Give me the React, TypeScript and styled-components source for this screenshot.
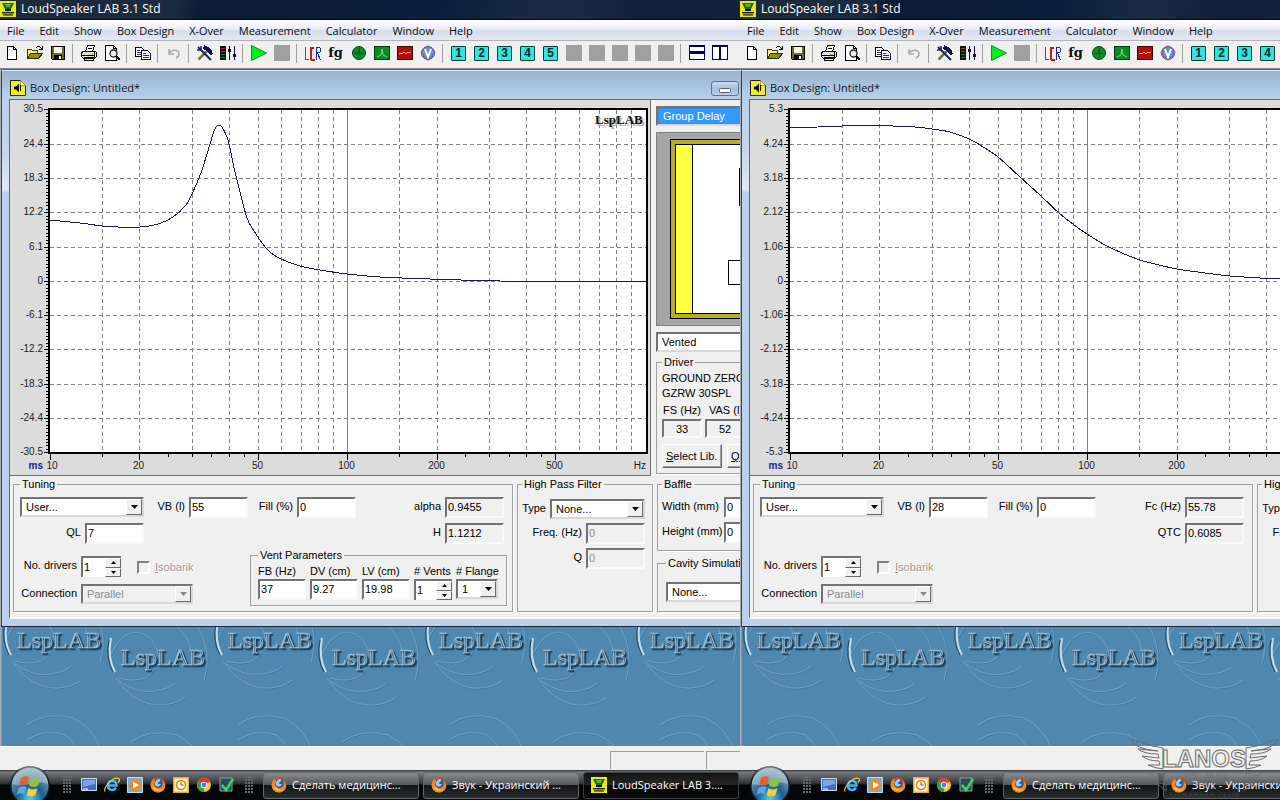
import React, { useId } from 'react';
import styled, { createGlobalStyle } from 'styled-components';

const UI = `"Open Sans", "Noto Sans", sans-serif`;
const SANS = `"Liberation Sans", Arial, sans-serif`;
const SERIF = `"Liberation Serif", "Times New Roman", serif`;

const GlobalStyle = createGlobalStyle`
  *, *::before, *::after { box-sizing: border-box; }
  body { margin: 0; background: #f0f0f0; }
  button, input, select { font: inherit; color: inherit; margin: 0; border-radius: 0; }
  fieldset { min-width: 0; margin: 0; }
`;

/* ---------- page shell ---------- */

const Desktop = styled.main`
  position: relative;
  display: grid;
  grid-template-columns: minmax(0, 37fr) minmax(0, 27fr);
  min-height: 100vh;
  overflow: hidden;
  font: 11px/14px ${SANS};
  color: #000;
`;

const Screen = styled.section`
  display: flex;
  flex-direction: column;
  min-width: 0;
  overflow: hidden;
`;

const TitleBar = styled.header`
  display: flex;
  align-items: center;
  gap: 5px;
  height: 20px;
  padding: 0 0 1px 0;
  color: #fff;
  font: 12px/18px ${UI};
  border-bottom: 1px solid #04090f;
  background: linear-gradient(100deg, #1d2a3b 0, #1a2a40 24%, #0b1c35 27%, #0c1f3a 60%, #1a2c44 75%, #0f2038 88%, #12243d 100%);
`;

const MenuBar = styled.nav`
  display: flex;
  height: 21px;
  flex: none;
  background: linear-gradient(#ffffff, #e9edf6 45%, #d6dcec 55%, #e4e9f4);
  border-bottom: 1px solid #b4b4b8;
`;

const MenuItem = styled.button`
  flex: none;
  border: 0;
  background: none;
  padding: 0 8px 0 7px;
  font: 11px/19px ${UI};
  color: #0a0a12;
`;

const ToolBar = styled.div`
  display: flex;
  align-items: center;
  height: 28px;
  flex: none;
  padding-bottom: 3px;
  background: #f0f0f0;
  border-bottom: 1px solid #8c8c8c;
`;

const ToolButton = styled.button`
  display: flex;
  align-items: center;
  justify-content: center;
  flex: none;
  width: 23px;
  height: 22px;
  padding: 0;
  border: 0;
  background: none;
`;

const ToolDivider = styled.span`
  flex: none;
  width: 1px;
  height: 19px;
  margin: 0 4px 0 3px;
  background: #a0a0a0;
`;

const Workspace = styled.div`
  display: flex;
  flex-direction: column;
  flex: 1;
  border-left: 1px solid #a9b0b5;
  border-top: 1px solid #5b6268;
`;

/* ---------- document window ---------- */

const DocWindow = styled.article`
  min-width: 739px;
  flex: none;
  border-left: 1px solid #39434c;
  border-top: 1px solid #d7e4f2;
  border-bottom: 1px solid #1d2a33;
  padding: 0 0 7px 7px;
  background: linear-gradient(#99b4d1 0, #b9d1ea 28px, #c3d6ea 80px, #dfeaf8 118px, #b9d1ea 122px);
`;

const DocTitle = styled.div`
  display: flex;
  align-items: center;
  gap: 4px;
  height: 28px;
  padding: 6px 0 0 1px;
  font: 11px/18px ${UI};
  color: #10141c;
`;

const MinimizeButton = styled.button`
  display: flex;
  align-items: flex-end;
  justify-content: center;
  width: 28px;
  height: 15px;
  margin-left: auto;
  margin-right: 1px;
  padding: 0 0 1px;
  border: 1px solid #5e7389;
  border-radius: 3px;
  background: linear-gradient(#c9dbee, #a5bfdb 50%, #b9d2ea);
`;

const DocBody = styled.div`
  border-left: 1px solid #5f6b74;
  border-top: 1px solid #5f6b74;
  border-bottom: 2px solid #fbfbfb;
  background: #f0f0f0;
  overflow: hidden;
`;

const UpperArea = styled.div`
  display: flex;
  height: 376px;
`;

const LowerArea = styled.div`
  display: flex;
  gap: 4px;
  padding: 2px 0 5px 3px;
`;

const ChartPane = styled.figure`
  flex: none;
  width: 641px;
  margin: 0;
  background: #dcdcdc;
  border-right: 1px solid #707070;
  border-bottom: 1px solid #707070;
  svg { display: block; }
`;

const SidePane = styled.aside`
  flex: 1;
  display: flex;
  flex-direction: column;
  padding: 6px 0 0 5px;
  min-width: 0;
  overflow: hidden;
`;

/* ---------- form parts ---------- */

const Group = styled.fieldset<{ $width?: number; $pad: string }>`
  flex: none;
  width: ${(p) => (p.$width ? `${p.$width}px` : 'auto')};
  padding: ${(p) => p.$pad};
  border: 1px solid #a0a0a0;
  box-shadow: 1px 1px 0 #fff;
`;

const DriverGroup = styled(Group)`
  margin-top: 4px;
`;

const Legend = styled.legend`
  padding: 0 2px;
  line-height: 13px;
`;

const Row = styled.div<{ $top?: number; $gap?: number }>`
  display: flex;
  align-items: flex-start;
  gap: ${(p) => p.$gap ?? 4}px;
  margin-top: ${(p) => p.$top ?? 0}px;
`;

const Label = styled.label<{ $width?: number; $align?: string }>`
  flex: none;
  width: ${(p) => (p.$width ? `${p.$width}px` : 'auto')};
  text-align: ${(p) => p.$align ?? 'right'};
  line-height: 18px;
  white-space: nowrap;
`;

const TextBox = styled.input<{ $width: number }>`
  flex: none;
  width: ${(p) => p.$width}px;
  height: 21px;
  padding: 0 0 2px 1px;
  border: 2px solid;
  border-color: #737373 #fafafa #fafafa #737373;
  background: ${(p) => (p.readOnly || p.disabled ? '#f0f0f0' : '#fff')};
  color: ${(p) => (p.disabled ? '#8a8a8a' : '#000')};
  outline: 0;
`;

const DriverValue = styled(TextBox)`
  height: 19px;
  padding: 0;
  text-align: center;
`;

const ComboFrame = styled.span<{ $width: number; $disabled?: boolean }>`
  flex: none;
  display: flex;
  width: ${(p) => p.$width}px;
  height: 20px;
  border: 2px solid;
  border-color: #737373 #d8d8d8 #d8d8d8 #737373;
  background: ${(p) => (p.$disabled ? '#f0f0f0' : '#fff')};
`;

const ComboSelect = styled.select<{ $active?: boolean; $pad?: number }>`
  flex: 1;
  min-width: 0;
  appearance: none;
  border: ${(p) => (p.$active ? '1px dotted #c86400' : '0')};
  padding: 0 0 0 ${(p) => p.$pad ?? 4}px;
  background: ${(p) => (p.$active ? '#3399ff' : 'transparent')};
  color: ${(p) => (p.$active ? '#fff' : p.disabled ? '#8a8a8a' : '#000')};
  opacity: 1;
  outline: 0;
`;

const ComboArrow = styled.span`
  display: flex;
  align-items: center;
  justify-content: center;
  width: 16px;
  background: #f0f0f0;
  border: 1px solid;
  border-color: #fff #696969 #696969 #fff;
`;

const SpinFrame = styled.span<{ $width: number }>`
  flex: none;
  display: flex;
  width: ${(p) => p.$width}px;
  height: 21px;
  border-left: 2px solid #737373;
  border-top: 2px solid #737373;
  background: #fff;
`;

const SpinInput = styled.input`
  flex: 1;
  min-width: 0;
  border: 0;
  padding: 0 0 2px 1px;
  background: none;
  outline: 0;
`;

const SpinButtons = styled.span`
  display: flex;
  flex-direction: column;
  width: 16px;
`;

const SpinButton = styled.button`
  flex: 1;
  display: flex;
  align-items: center;
  justify-content: center;
  padding: 0;
  border: 1px solid;
  border-color: #fff #696969 #696969 #fff;
  background: #f0f0f0;
`;

const TickBox = styled.input`
  flex: none;
  appearance: none;
  width: 13px;
  height: 13px;
  border: 2px solid;
  border-color: #808080 #fff #fff #808080;
  background: #f0f0f0;
`;

const TickLabel = styled.label`
  display: flex;
  align-items: center;
  gap: 5px;
  height: 22px;
  margin-left: 12px;
  color: #9a9a9a;
  text-shadow: 1px 1px 0 #fff;
`;

const PushButton = styled.button<{ $width: number }>`
  flex: none;
  width: ${(p) => p.$width}px;
  height: 24px;
  padding: 0 0 0 3px;
  text-align: left;
  white-space: nowrap;
  border: 1px solid;
  border-color: #fff #696969 #696969 #fff;
  box-shadow: inset -1px -1px 0 #a0a0a0;
  background: #f0f0f0;
`;

const Split = styled.div`
  display: flex;
  justify-content: space-between;
  min-height: 57px;
  margin-top: 5px;
`;

const DriverRows = styled.div`
  padding-top: 7px;
`;

const VentGrid = styled.div`
  display: grid;
  grid-template-columns: 48px 48px 48px 38px 43px;
  column-gap: 4px;
`;

const VentField = styled.div`
  display: flex;
  flex-direction: column;
  align-items: flex-start;
  label { line-height: 14px; height: 15px; }
`;

const SideStack = styled.div`
  display: flex;
  flex-direction: column;
  justify-content: space-between;
`;

const DriverName = styled.p`
  margin: 0;
  line-height: 15px;
  white-space: nowrap;
`;

const EnclosurePane = styled.div`
  flex: none;
  width: 160px;
  height: 194px;
  margin: 6px 0;
  border: 1px solid #808080;
  background: #a6a6a6;
  svg { display: block; }
`;

/* ---------- bottom of the screen ---------- */

const Wallpaper = styled.div`
  position: relative;
  flex: 1;
  min-height: 118px;
  border-left: 1px solid #7b98ad;
  background: #5087ae;
  overflow: hidden;
  svg { position: absolute; inset: 0; }
`;

const StatusBar = styled.footer`
  display: flex;
  justify-content: flex-end;
  flex: none;
  gap: 2px;
  min-width: 740px;
  height: 24px;
  padding-top: 4px;
  background: #f0f0f0;
  border-top: 1px solid #fff;
`;

const StatusCell = styled.span<{ $width: number }>`
  width: ${(p) => p.$width}px;
  height: 18px;
  border-left: 1px solid #a09c98;
  border-top: 1px solid #a09c98;
`;

const TaskBar = styled.nav`
  display: flex;
  align-items: center;
  flex: none;
  height: 30px;
  min-width: 740px;
  background: linear-gradient(#2b3036 0, #787b7f 2px, #46494d 10px, #2a2d30 14px, #030405 15px, #060708 100%);
`;

const StartButton = styled.button`
  flex: none;
  width: 60px;
  height: 30px;
  padding: 0;
  border: 0;
  background: none;
  svg { display: block; margin-top: -4px; }
`;

const Grip = styled.span`
  flex: none;
  width: 9px;
  height: 18px;
  margin-left: 3px;
  background: radial-gradient(circle at 1px 1px, #64696e 1px, transparent 1px) 0 0 / 3px 3px;
`;

const QuickLaunch = styled.div`
  display: flex;
  flex: none;
  margin: 0 4px 0 5px;
`;

const QuickButton = styled.button`
  width: 23px;
  height: 24px;
  padding: 0;
  border: 0;
  background: none;
  display: flex;
  align-items: center;
  justify-content: center;
`;

const TaskButtons = styled.div`
  display: flex;
  gap: 4px;
  margin-left: 9px;
`;

const TaskButton = styled.button<{ $active?: boolean }>`
  display: flex;
  align-items: center;
  gap: 5px;
  flex: none;
  width: 156px;
  height: 27px;
  padding: 0 0 0 7px;
  border: 1px solid ${(p) => (p.$active ? '#3c3f42' : '#63666a')};
  border-radius: 3px;
  font: 11px/18px ${UI};
  color: #fff;
  white-space: nowrap;
  overflow: hidden;
  background: ${(p) =>
    p.$active
      ? 'linear-gradient(#141414, #262626 46%, #050505 50%, #0a0a0a)'
      : 'linear-gradient(#8a8c8f, #56585b 46%, #141516 50%, #2a2c2e)'};
`;

const Watermark = styled.svg`
  position: absolute;
  right: 0;
  bottom: 0;
  pointer-events: none;
`;

/* ---------- icons ---------- */

const Px = ({ children, size = 18 }: { children: React.ReactNode; size?: number }) => (
  <svg width={size} height={size} viewBox="0 0 18 18" fill="none" shapeRendering="crispEdges" aria-hidden="true">
    {children}
  </svg>
);

const AppIcon = ({ size = 15 }: { size?: number }) => (
  <svg width={size} height={size} viewBox="0 0 16 16" aria-hidden="true">
    <rect width="16" height="16" fill="#eaea10" />
    <path d="M2 2h12l-3 6H5z" fill="#146a2c" />
    <path d="M5 3h6l-1 3H6z" fill="#5fae3c" />
    <path d="M5 8h6v2H5z" fill="#111" />
    <ellipse cx="8" cy="12.5" rx="6" ry="1.8" fill="#8a9412" />
    <path d="M2 11.5h12M3 14h10" stroke="#222" strokeWidth="1" />
  </svg>
);

const BoxIcon = () => (
  <svg width="16" height="16" viewBox="0 0 16 16" aria-hidden="true">
    <path d="M.5.5h10l5 5v10H.5z" fill="#f6ee1c" stroke="#222" />
    <path d="M10.500.5v5h5" fill="#fff9a8" stroke="#8a8410" strokeWidth=".7" />
    <path d="M4 6.500h2l3-3v9l-3-3H4z" fill="#111" />
    <path d="M10.500 5v6" stroke="#111" />
  </svg>
);

const icons: Record<string, React.ReactNode> = {
  New: <Px><path d="M4.500 2.500h6l3 3v10h-9z" fill="#fff" stroke="#000" /><path d="M10.500 2.500v3h3" stroke="#000" /></Px>,
  Open: (
    <Px>
      <path d="M1.500 14.500v-9h4l1 1h5v3" fill="#fff36b" stroke="#3c3c00" />
      <path d="M1.500 14.500l3-5h12l-4 5z" fill="#8c8c28" stroke="#2a2a00" />
      <path d="M10 4c2-2 4-2 6 1M13 5.500h3V2" stroke="#000" />
    </Px>
  ),
  Save: (
    <Px>
      <path d="M2.500 2.500h13v13h-12l-1-1z" fill="#6c6c18" stroke="#000" />
      <path d="M5 3h8v6H5z" fill="#f4f4f4" />
      <path d="M5 11h8v5H5z" fill="#000" /><path d="M10 12h2v3h-2z" fill="#fff" />
    </Px>
  ),
  Print: (
    <Px>
      <path d="M5.500 7.500l2-6h7l-2 6" fill="#fff" stroke="#000" />
      <path d="M1.500 8.500l2-1h12l1 1v4l-2 2h-11l-2-2z" fill="#e0e0e0" stroke="#000" />
      <path d="M2 11.500h12M4 13.500h9v3H4zM8 4.500h4M15 8l-1 6" stroke="#000" />
      <path d="M10 10h3" stroke="#c9c900" />
    </Px>
  ),
  Preview: (
    <Px>
      <path d="M2.500 1.500h8l3 3v12h-11z" fill="#fff" stroke="#000" />
      <path d="M10.500 1.500v3h3" stroke="#000" />
      <circle cx="10.500" cy="9.500" r="3.500" fill="#eef" stroke="#222" shapeRendering="auto" strokeWidth="1.300" />
      <path d="M13 12l4 4" stroke="#000" strokeWidth="2" />
    </Px>
  ),
  Copy: (
    <Px>
      <path d="M1.500 3.500h6l2 2v7h-8z" fill="#fff" stroke="#000" />
      <path d="M7.500 6.500h6l3 3v6h-9z" fill="#fff" stroke="#00006c" />
      <path d="M3 6.500h3M3 8.500h4M3 10.500h4M9 9.500h3M9 11.500h6M9 13.500h6" stroke="#333" />
    </Px>
  ),
  Undo: (
    <Px>
      <path d="M4 5v5h5M4 10c2-5 10-5 10 0 0 2-1 3-3 4" stroke="#a8a8a8" strokeWidth="1.500" shapeRendering="auto" />
    </Px>
  ),
  Setup: (
    <Px>
      <path d="M2.500 15.500L13 5" stroke="#77772c" strokeWidth="2.500" shapeRendering="auto" />
      <path d="M2 3l13 13" stroke="#20205c" strokeWidth="2" shapeRendering="auto" />
      <path d="M1 6l4 0 0-4" stroke="#20205c" strokeWidth="1.500" shapeRendering="auto" />
      <path d="M8 1c4 1 8 4 9 9l-3 1-3-4-4-2z" fill="#10105c" />
    </Px>
  ),
  Levels: (
    <Px>
      <path d="M1 2h6v14H1z" fill="#111" />
      <path d="M2 4.500h4" stroke="#d02020" /><path d="M2 7.500h4M2 10.500h4M2 13.500h4" stroke="#188030" />
      <path d="M10.500 2v14M15.500 2v14" stroke="#10105c" />
      <path d="M9 5h3v3H9zM14 10h3v3h-3z" fill="#10105c" />
    </Px>
  ),
  Run: <Px><path d="M1.500 1.500l15 7.500-15 7.500z" fill="#00f020" stroke="#089a18" shapeRendering="auto" /></Px>,
  Stop: <Px><path d="M1 1h16v16H1z" fill="#a0a0a0" /></Px>,
  LCR: (
    <Px>
      <path d="M1.500 3v12M1 15.500h4" stroke="#0c7a5a" />
      <path d="M10 3.500H7M7 3v13M7 15.500h4" stroke="#c81818" strokeWidth="2" />
      <path d="M12 16V3M12 3.500h4M16.500 4v4M12 8.500h4M13.500 9l3 7" stroke="#1a2a9c" />
    </Px>
  ),
  Curve: (
    <Px>
      <circle cx="9" cy="9" r="6.500" fill="#0c8a24" stroke="#044a10" shapeRendering="auto" />
      <path d="M5 9.500h3v-4M9.500 4v9M10 9.500h3" stroke="#075a18" />
    </Px>
  ),
  Spectrum: (
    <Px>
      <path d="M1.500 2.500h15v13h-15z" fill="#0c8a24" stroke="#033c0c" />
      <path d="M4 13l4-2 1-6 1 6 4 2" stroke="#6ee07c" shapeRendering="auto" />
    </Px>
  ),
  Scope: (
    <Px>
      <path d="M1.500 2.500h15v13h-15z" fill="#b40c0c" stroke="#400404" />
      <path d="M3 10l2-1 1 1 2-2 2 2 2-2 1 1 2-1" stroke="#ffb060" shapeRendering="auto" />
    </Px>
  ),
  Voltage: (
    <Px>
      <circle cx="9" cy="9" r="6.500" fill="#5f93dc" stroke="#3a4c9c" shapeRendering="auto" />
      <path d="M9 1.500l7 7-7 8-7-8z" stroke="#b8506c" shapeRendering="auto" />
      <path d="M6 5l3 8 3-8" stroke="#fff" strokeWidth="2" shapeRendering="auto" />
    </Px>
  ),
  Blank: <Px><rect x="1" y="1" width="16" height="16" rx="1" fill="#a0a0a0" /></Px>,
  'Tile horizontally': (
    <Px><path d="M1.500 1.500h15v6h-15zM1.500 9.500h15v6h-15z" fill="#fff" stroke="#000060" /><path d="M1 2h16M1 9h16" stroke="#000060" strokeWidth="2" /></Px>
  ),
  'Tile vertically': (
    <Px><path d="M1.500 1.500h7v14h-7zM9.500 1.500h7v14h-7z" fill="#fff" stroke="#000060" /><path d="M1 2h16" stroke="#000060" strokeWidth="2" /></Px>
  ),
};

const NumberKey = styled.span`
  width: 15px;
  height: 15px;
  border: 1px solid #063c3c;
  border-radius: 1px;
  background: #2fe6e0;
  font: bold 12px/13px ${SANS};
  text-align: center;
  color: #052a2a;
`;

const FgMark = styled.span`
  font: bold 13px/14px "DejaVu Serif", ${SERIF};
  color: #111;
`;

const TOOLS = [
  'New', 'Open', 'Save', '|', 'Print', 'Preview', '|', 'Copy', '|', 'Undo', '|', 'Setup', 'Levels', '|',
  'Run', 'Stop', '|', 'LCR', 'fg', 'Curve', 'Spectrum', 'Scope', 'Voltage', '|', '1', '2', '3', '4', '5',
  'Blank', 'Blank', 'Blank', 'Blank', 'Blank', '|', 'Tile horizontally', 'Tile vertically',
];

const MENUS = ['File', 'Edit', 'Show', 'Box Design', 'X-Over', 'Measurement', 'Calculator', 'Window', 'Help'];

const Firefox = () => (
  <svg width="16" height="16" viewBox="0 0 16 16" aria-hidden="true">
    <circle cx="8" cy="8" r="7.500" fill="#d9541a" />
    <circle cx="8.500" cy="6.500" r="5" fill="#2c5a9c" />
    <path d="M8 2c3 0 3 2 1 3s-1 2 1 2-1 4-4 2 0-6 2-7z" fill="#a9c6ea" />
    <path d="M.8 6C2 3 3 2 4 1.500c0 2 1 3 2 3-2 1-3 3-1 5s5 2 7 0c1-2 1-4 0-6 3 2 4 6 2 9-3 4-9 4-12 0C.5 10 .5 8 .8 6z" fill="#f08a1e" />
    <path d="M2 10c2 4 8 5 11 2-2 1-6 1-8-1z" fill="#ffd04a" />
  </svg>
);

const QUICK: [string, React.ReactNode][] = [
  ['Show desktop', (
    <svg width="16" height="14" viewBox="0 0 16 14" aria-hidden="true">
      <path d="M.5.5h15v12H.5z" fill="#3f6ec4" stroke="#cfdcf2" /><path d="M2 2h12v4L2 9z" fill="#7fa5e4" /><path d="M2 11h5" stroke="#fff" />
    </svg>
  )],
  ['Internet Explorer', (
    <svg width="16" height="16" viewBox="0 0 16 16" fill="none" aria-hidden="true">
      <path d="M4 8.500h8.500C12.500 2 4 2 4 8.500c0 5 6 6 8 2" stroke="#49b4f2" strokeWidth="2.500" />
      <path d="M1 14.500C-1 10 10-1 15 1.500c1 1 0 3-1 4" stroke="#f2c63c" strokeWidth="1.200" />
    </svg>
  )],
  ['Media Player', (
    <svg width="16" height="16" viewBox="0 0 16 16" aria-hidden="true">
      <path d="M.5.5h15v15H.5z" fill="#6fb4e0" stroke="#bcdcf0" /><circle cx="8" cy="8" r="6" fill="#f08a1c" /><path d="M6 4.500l6 3.500-6 3.500z" fill="#fff" />
    </svg>
  )],
  ['Firefox', <Firefox key="f" />],
  ['Outlook', (
    <svg width="16" height="16" viewBox="0 0 16 16" aria-hidden="true">
      <path d="M.5.5h15v15H.5z" fill="#fff1c4" stroke="#e9a93a" strokeWidth="2" /><circle cx="8" cy="8" r="4.500" fill="#fff8e0" stroke="#c8872a" strokeWidth="1.500" /><path d="M8 5v3h2.500" stroke="#805010" fill="none" />
    </svg>
  )],
  ['Chrome', (
    <svg width="16" height="16" viewBox="0 0 16 16" aria-hidden="true">
      <circle cx="8" cy="8" r="7" fill="#f4c81e" /><path d="M8 8L1.900 4.500A7 7 0 0 1 14.100 4.500z" fill="#dd3a2c" /><path d="M8 8L1.900 4.500A7 7 0 0 0 8 15z" fill="#35a04a" />
      <circle cx="8" cy="8" r="3.200" fill="#fff" /><circle cx="8" cy="8" r="2.400" fill="#3f7fe0" />
    </svg>
  )],
  ['Task checker', (
    <svg width="16" height="16" viewBox="0 0 16 16" aria-hidden="true">
      <path d="M1 1h12v13H1z" fill="#2c4c58" stroke="#8aa" /><path d="M3 8l4 5 7-11" stroke="#3fd46a" strokeWidth="2.500" fill="none" />
    </svg>
  )],
];

function StartOrb() {
  const id = useId();
  return (
    <svg width="60" height="34" viewBox="0 0 60 34" aria-hidden="true">
      <defs>
        <radialGradient id={id} cx="50%" cy="85%" r="80%">
          <stop offset="0" stopColor="#4fd0f4" /><stop offset=".45" stopColor="#1d5f92" /><stop offset="1" stopColor="#8fa8b8" />
        </radialGradient>
      </defs>
      <circle cx="30" cy="20" r="20" fill="#0c1c28" />
      <circle cx="30" cy="20" r="18.500" fill={`url(#${id})`} />
      <path d="M12 18a18 18 0 0 1 36 0c-12-5-24 4-36 0z" fill="#dce8ee" opacity=".4" />
      <path d="M21 12c3-2 6-2 8-1l-2 8c-3-1-5-1-8 1z" fill="#e8602c" />
      <path d="M31 11.500c3 2 5 2 9 0l-2 8c-3 2-6 2-9 0z" fill="#8cc63c" />
      <path d="M18.500 22c3-2 6-2 8-1l-2 7c-3-1-5-1-8 1z" fill="#5aa8e8" />
      <path d="M28.500 22c3 2 5 2 9 0l-2 7c-3 2-6 2-9 0z" fill="#f8d03c" />
    </svg>
  );
}

/* ---------- chart ---------- */

type Pt = [number, number];

const AXIS_X = 39.6;
const ZERO_Y = 180.8;
const STEP_Y = 34.3;
const DECADE = 297.5;
const freqX = (f: number) => Math.round(AXIS_X + Math.log10(f / 10) * DECADE) + 0.5;
const lineY = (k: number) => Math.round(ZERO_Y - k * STEP_Y) + 0.5;

const smooth = (pts: Pt[]) =>
  pts.slice(1).reduce((d, p, i) => {
    const p0 = pts[Math.max(i - 1, 0)];
    const p1 = pts[i];
    const p3 = pts[Math.min(i + 2, pts.length - 1)];
    const c1 = [p1[0] + (p[0] - p0[0]) / 6, p1[1] + (p[1] - p0[1]) / 6];
    const c2 = [p[0] - (p3[0] - p1[0]) / 6, p[1] - (p3[1] - p1[1]) / 6];
    return `${d}C${c1[0]},${c1[1]} ${c2[0]},${c2[1]} ${p[0]},${p[1]}`;
  }, `M${pts[0][0]},${pts[0][1]}`);

const VENTED_CURVE: Pt[] = [
  [39, 120], [70, 123], [92, 126], [108, 127], [130, 127], [148, 124], [163, 117], [176, 105], [182, 94],
  [189, 78], [193, 67], [200, 44], [204, 31], [207, 26], [209, 25], [212, 27], [217, 37], [220, 48], [224, 68],
  [230, 92], [237, 118], [244, 131], [252, 143], [260, 152], [271, 159], [290, 166], [310, 170], [337, 174],
  [370, 177], [420, 179], [490, 181], [550, 181], [636, 181],
];

const CLOSED_CURVE: Pt[] = [
  [39, 27], [68, 27], [92, 26], [129, 25], [143, 26], [165, 27], [182, 29], [200, 32], [219, 39], [230, 45],
  [248, 57], [270, 77], [291, 96], [309, 113], [324, 125], [337, 134], [355, 145], [372, 153], [390, 160],
  [405, 164], [427, 169], [455, 173], [480, 176], [510, 178], [530, 179], [636, 181],
];

const GRID_FREQS = [15, 20, 30, 40, 50, 60, 70, 80, 90, 150, 200, 300, 400, 500, 600, 700, 800, 900];
const TICK_FREQS = [10, 15, 20, 25, 30, 35, 40, 45, 50, 100, 150, 200, 250, 300, 350, 400, 450, 500];
const LABEL_FREQS = [20, 50, 100, 200, 500];

function Chart({ curve, labels }: { curve: Pt[]; labels: string[] }) {
  return (
    <svg width="640" height="375" viewBox="0 0 640 375" fontFamily="Liberation Sans, Arial, sans-serif" fontSize="10" fill="#222">
      <rect x="39" y="9" width="598" height="344" fill="#fff" />
      <g shapeRendering="crispEdges" stroke="#808080">
        {GRID_FREQS.map((f) => <line key={f} x1={freqX(f)} x2={freqX(f)} y1="10" y2="352" strokeDasharray="4 3" />)}
        {[-4, -3, -2, -1, 0, 1, 2, 3, 4].map((k) => (
          <line key={k} x1="40" x2="636" y1={lineY(k)} y2={lineY(k)} strokeDasharray="4 3" />
        ))}
        <line x1={freqX(100)} x2={freqX(100)} y1="10" y2="352" />
      </g>
      <g shapeRendering="crispEdges" stroke="#000">
        {Array.from({ length: 101 }, (_, i) => {
          const y = lineY((i - 50) / 10);
          return <line key={i} x1={i % 10 ? 36 : 34} x2="39" y1={y} y2={y} />;
        })}
        {TICK_FREQS.map((f) => (
          <line key={f} x1={freqX(f)} x2={freqX(f)} y1="353" y2={f === 10 || LABEL_FREQS.includes(f) ? 360 : 357} />
        ))}
        <rect x="39" y="9" width="598" height="344" fill="none" strokeWidth="2" />
        <path d={smooth(curve)} fill="none" stroke="#15155e" />
      </g>
      {labels.map((t, i) => <text key={t} x="33" y={lineY(5 - i) + 2} textAnchor="end">{t}</text>)}
      <text x="33" y="369" textAnchor="end" fill="#1a1a9c" fontWeight="bold">ms</text>
      <text x="42" y="369" textAnchor="middle">10</text>
      {LABEL_FREQS.map((f) => <text key={f} x={freqX(f) - 1} y="369" textAnchor="middle">{f}</text>)}
      <text x="636" y="369" textAnchor="end">Hz</text>
      <g fontFamily="Liberation Serif, serif" fontSize="13" fontWeight="bold">
        <text x="585" y="24" fill="#111" style={{ textShadow: '2px 2px 0 #b4b4b4' }}>LspLAB</text>
      </g>
    </svg>
  );
}

function Enclosure() {
  return (
    <svg width="158" height="192" viewBox="0 0 158 192" shapeRendering="crispEdges" aria-hidden="true">
      <rect x="13.500" y="6.500" width="150" height="179" fill="#b5ac2c" stroke="#000" />
      <rect x="18.500" y="11.500" width="145" height="169" fill="#fff" stroke="#000" />
      <rect x="18.500" y="11.500" width="17" height="169" fill="#ffff40" stroke="#000" />
      <rect x="82.500" y="35.500" width="30" height="37" fill="#fff" stroke="#000" />
      <rect x="71.500" y="127.500" width="40" height="24" fill="#fff" stroke="#000" />
    </svg>
  );
}

/* ---------- form helpers ---------- */

const Triangle = ({ up, muted, small }: { up?: boolean; muted?: boolean; small?: boolean }) => (
  <svg width={small ? 5 : 7} height={small ? 3 : 4} viewBox="0 0 7 4" aria-hidden="true">
    <path d={up ? 'M0 4h7L3.500 0z' : 'M0 0h7L3.500 4z'} fill={muted ? '#8a8a8a' : '#000'} />
  </svg>
);

function Combo(props: { id?: string; name?: string; width: number; value: string; disabled?: boolean; active?: boolean; pad?: number }) {
  return (
    <ComboFrame $width={props.width} $disabled={props.disabled}>
      <ComboSelect id={props.id} aria-label={props.name} disabled={props.disabled} $active={props.active} $pad={props.pad}>
        <option>{props.value}</option>
      </ComboSelect>
      <ComboArrow><Triangle muted={props.disabled} /></ComboArrow>
    </ComboFrame>
  );
}

function Spin({ id, width }: { id: string; width: number }) {
  return (
    <SpinFrame $width={width}>
      <SpinInput id={id} defaultValue="1" />
      <SpinButtons>
        <SpinButton aria-label="Increase"><Triangle up small /></SpinButton>
        <SpinButton aria-label="Decrease"><Triangle small /></SpinButton>
      </SpinButtons>
    </SpinFrame>
  );
}

/* ---------- wallpaper ---------- */

function Rings() {
  return (
    <>
      <path d="M11 34Q30 62 56 61 72 60 80 53" />
      <path d="M14 37Q32 50 50 47 64 45 70 39" />
      <path d="M14 34Q28 38 40 34 47 30 50 24" />
      <path d="M6 10Q16-12 32-12 50-10 54 14" />
      <path d="M68-20Q84-10 86 6" />
      <path d="M92-20Q108 8 99 36" />
      <path d="M26 98Q44 84 72 91 94 102 100 124" />
      <path d="M26 113Q44 101 64 108 72 113 76 122" />
    </>
  );
}

function Emblem({ x, y }: { x: number; y: number }) {
  return (
    <g transform={`translate(${x} ${y})`} fill="none">
      <g stroke="#467aa1" transform="translate(1 1)"><Rings /></g>
      <g stroke="#6c9fc4"><Rings /></g>
      <path d="M6-6Q2 14 10 28" stroke="#c4dcec" strokeWidth="2" />
      <path d="M4-4Q0 14 8 28" stroke="#21465f" />
      <text
        x="16" y="21" fill="#a9cde6" stroke="#9cc4e0" strokeWidth=".5"
        fontFamily="Liberation Serif, serif" fontSize="24"
        style={{ textShadow: '1px 1px 0 #1d3d56, 2px 2px 1px #1d3d56' }}
      >
        LspLAB
      </text>
    </g>
  );
}

function Tiles() {
  const id = useId();
  return (
    <svg width="100%" height="100%" aria-hidden="true">
      <defs>
        <pattern id={id} width="211" height="400" patternUnits="userSpaceOnUse">
          <Emblem x={-1} y={0} />
          <Emblem x={103} y={17} />
          <Emblem x={-108} y={17} />
        </pattern>
      </defs>
      <rect width="100%" height="100%" fill={`url(#${id})`} />
    </svg>
  );
}

/* ---------- one application screen ---------- */

interface ScreenData {
  curve: Pt[];
  labels: string[];
  volume: string;
  results: [string, string][];
  vented: boolean;
}

function LabScreen({ data }: { data: ScreenData }) {
  const uid = useId();
  const id = (n: string) => `${uid}${n}`;
  return (
    <Screen>
      <TitleBar><AppIcon size={16} />LoudSpeaker LAB 3.1 Std</TitleBar>
      <MenuBar>{MENUS.map((m) => <MenuItem key={m}>{m}</MenuItem>)}</MenuBar>
      <ToolBar>
        {TOOLS.map((t, i) => {
          if (t === '|') return <ToolDivider key={i} />;
          return (
            <ToolButton key={i} aria-label={t}>
              {t === 'fg' ? <FgMark>fg</FgMark> : /^\d$/.test(t) ? <NumberKey>{t}</NumberKey> : icons[t]}
            </ToolButton>
          );
        })}
      </ToolBar>
      <Workspace>
        <DocWindow>
          <DocTitle>
            <BoxIcon />Box Design: Untitled*
            <MinimizeButton aria-label="Minimize">
              <svg width="12" height="6" viewBox="0 0 12 6" aria-hidden="true"><rect x=".5" y=".5" width="11" height="4" rx="1" fill="#fff" stroke="#54606c" /></svg>
            </MinimizeButton>
          </DocTitle>
          <DocBody>
            <UpperArea>
              <ChartPane><Chart curve={data.curve} labels={data.labels} /></ChartPane>
              <SidePane>
                <Combo name="Graph" width={160} value="Group Delay" active />
                <EnclosurePane><Enclosure /></EnclosurePane>
                <Combo name="Box type" width={160} value="Vented" />
                <DriverGroup $width={160} $pad="2px 4px 5px 5px">
                  <Legend>Driver</Legend>
                  <DriverName>GROUND ZERO</DriverName>
                  <DriverName>GZRW 30SPL</DriverName>
                  <Row $gap={3}>
                    <Label htmlFor={id('fs')} $width={39}>FS (Hz)</Label>
                    <Label htmlFor={id('vas')} $width={39}>VAS (l)</Label>
                  </Row>
                  <Row $gap={3}>
                    <DriverValue id={id('fs')} readOnly defaultValue="33" $width={40} />
                    <DriverValue id={id('vas')} readOnly defaultValue="52" $width={40} />
                  </Row>
                  <Row $top={6} $gap={5}>
                    <PushButton $width={60}><u>S</u>elect Lib.</PushButton>
                    <PushButton $width={60}><u>Q</u></PushButton>
                  </Row>
                </DriverGroup>
              </SidePane>
            </UpperArea>
            <LowerArea>
              <Group $width={500} $pad="6px 5px 5px 6px">
                <Legend>Tuning</Legend>
                <Row>
                  <Combo name="Tuning" width={124} value="User..." />
                  <Label htmlFor={id('vb')} $width={37}>VB (l)</Label>
                  <TextBox id={id('vb')} defaultValue={data.volume} $width={59} />
                  <Label htmlFor={id('fill')} $width={41}>Fill (%)</Label>
                  <TextBox id={id('fill')} defaultValue="0" $width={59} />
                  <Label htmlFor={id('r0')} $width={81}>{data.results[0][0]}</Label>
                  <TextBox id={id('r0')} readOnly defaultValue={data.results[0][1]} $width={59} />
                </Row>
                <Row $top={5}>
                  {data.vented ? (
                    <>
                      <Label htmlFor={id('ql')} $width={61}>QL</Label>
                      <TextBox id={id('ql')} defaultValue="7" $width={59} />
                      <Label htmlFor={id('r1')} $width={293}>{data.results[1][0]}</Label>
                    </>
                  ) : (
                    <Label htmlFor={id('r1')} $width={421}>{data.results[1][0]}</Label>
                  )}
                  <TextBox id={id('r1')} readOnly defaultValue={data.results[1][1]} $width={59} />
                </Row>
                <Split>
                  <DriverRows>
                    <Row>
                      <Label htmlFor={id('nd')} $width={57}>No. drivers</Label>
                      <Spin id={id('nd')} width={40} />
                      <TickLabel><TickBox type="checkbox" disabled /><span><u>I</u>sobarik</span></TickLabel>
                    </Row>
                    <Row $top={6}>
                      <Label htmlFor={id('cn')} $width={57}>Connection</Label>
                      <Combo id={id('cn')} width={112} value="Parallel" disabled />
                    </Row>
                  </DriverRows>
                  {data.vented && (
                    <Group $width={257} $pad="2px 0 5px 7px">
                      <Legend>Vent Parameters</Legend>
                      <VentGrid>
                        <VentField><Label htmlFor={id('fb')}>FB (Hz)</Label><TextBox id={id('fb')} defaultValue="37" $width={48} /></VentField>
                        <VentField><Label htmlFor={id('dv')}>DV (cm)</Label><TextBox id={id('dv')} defaultValue="9.27" $width={48} /></VentField>
                        <VentField><Label htmlFor={id('lv')}>LV (cm)</Label><TextBox id={id('lv')} defaultValue="19.98" $width={48} /></VentField>
                        <VentField><Label htmlFor={id('nv')}># Vents</Label><Spin id={id('nv')} width={38} /></VentField>
                        <VentField><Label htmlFor={id('fl')}># Flange</Label><Combo id={id('fl')} width={42} value="1" /></VentField>
                      </VentGrid>
                    </Group>
                  )}
                </Split>
              </Group>
              <Group $width={136} $pad="6px 7px 5px 4px">
                <Legend>High Pass Filter</Legend>
                <Row $top={2}>
                  <Label htmlFor={id('ht')} $width={24}>Type</Label>
                  <Combo id={id('ht')} width={95} value="None..." />
                </Row>
                <Row $top={4}>
                  <Label htmlFor={id('hf')} $width={60}>Freq. (Hz)</Label>
                  <TextBox id={id('hf')} disabled defaultValue="0" $width={59} />
                </Row>
                <Row $top={4}>
                  <Label htmlFor={id('hq')} $width={60}>Q</Label>
                  <TextBox id={id('hq')} disabled defaultValue="0" $width={59} />
                </Row>
              </Group>
              <SideStack>
                <Group $width={160} $pad="6px 4px 7px 4px">
                  <Legend>Baffle</Legend>
                  <Row $gap={2}>
                    <Label htmlFor={id('bw')} $width={60} $align="left">Width (mm)</Label>
                    <TextBox id={id('bw')} defaultValue="0" $width={59} />
                  </Row>
                  <Row $top={4} $gap={2}>
                    <Label htmlFor={id('bh')} $width={60} $align="left">Height (mm)</Label>
                    <TextBox id={id('bh')} defaultValue="0" $width={59} />
                  </Row>
                </Group>
                <Group $width={160} $pad="12px 4px 9px 8px">
                  <Legend>Cavity Simulation</Legend>
                  <Combo name="Cavity simulation" width={130} value="None..." />
                </Group>
              </SideStack>
            </LowerArea>
          </DocBody>
        </DocWindow>
        <Wallpaper><Tiles /></Wallpaper>
      </Workspace>
      <StatusBar><StatusCell $width={94} /><StatusCell $width={34} /></StatusBar>
      <TaskBar>
        <StartButton aria-label="Start"><StartOrb /></StartButton>
        <Grip />
        <QuickLaunch>{QUICK.map(([n, icon]) => <QuickButton key={n} aria-label={n}>{icon}</QuickButton>)}</QuickLaunch>
        <Grip />
        <TaskButtons>
          <TaskButton><Firefox />Сделать медицинс...</TaskButton>
          <TaskButton><Firefox />Звук - Украинский ...</TaskButton>
          <TaskButton $active><AppIcon size={16} />LoudSpeaker LAB 3....</TaskButton>
        </TaskButtons>
      </TaskBar>
    </Screen>
  );
}

const LEFT: ScreenData = {
  curve: VENTED_CURVE,
  labels: ['30.5', '24.4', '18.3', '12.2', '6.1', '0', '-6.1', '-12.2', '-18.3', '-24.4', '-30.5'],
  volume: '55',
  results: [['alpha', '0.9455'], ['H', '1.1212']],
  vented: true,
};

const RIGHT: ScreenData = {
  curve: CLOSED_CURVE,
  labels: ['5.3', '4.24', '3.18', '2.12', '1.06', '0', '-1.06', '-2.12', '-3.18', '-4.24', '-5.3'],
  volume: '28',
  results: [['Fc (Hz)', '55.78'], ['QTC', '0.6085']],
  vented: false,
};

const WING = 'M1 1L22 8Q29 9 33 10V31Q24 30 18 27L30 27 29 23Q18 23 12 18L29 20 28 16Q14 16 8 11L28 13Q4 11 1 1z';

export default function App() {
  return (
    <>
      <GlobalStyle />
      <Desktop>
        <LabScreen data={LEFT} />
        <LabScreen data={RIGHT} />
        <Watermark width="150" height="62" viewBox="0 0 150 62" fill="none" stroke="#6b6b6b">
          <path d={WING} />
          <path d={WING} transform="translate(149 0) scale(-1 1)" />
          <path d="M16 34l18 1v8zM24 43l12 4v6zM134 34l-18 1v8zM126 43l-12 4v6z" opacity=".7" />
          <g fontFamily="Liberation Sans, Arial, sans-serif" fontWeight="bold" textAnchor="middle">
            <text x="74" y="29" fontSize="24">LANOS</text>
            <text x="75" y="46" fontSize="16" opacity=".6">CLAN</text>
            <text x="75" y="60" fontSize="8" fill="#3a3a3a" stroke="none">UKRAINIAN CLUB</text>
          </g>
        </Watermark>
      </Desktop>
    </>
  );
}
